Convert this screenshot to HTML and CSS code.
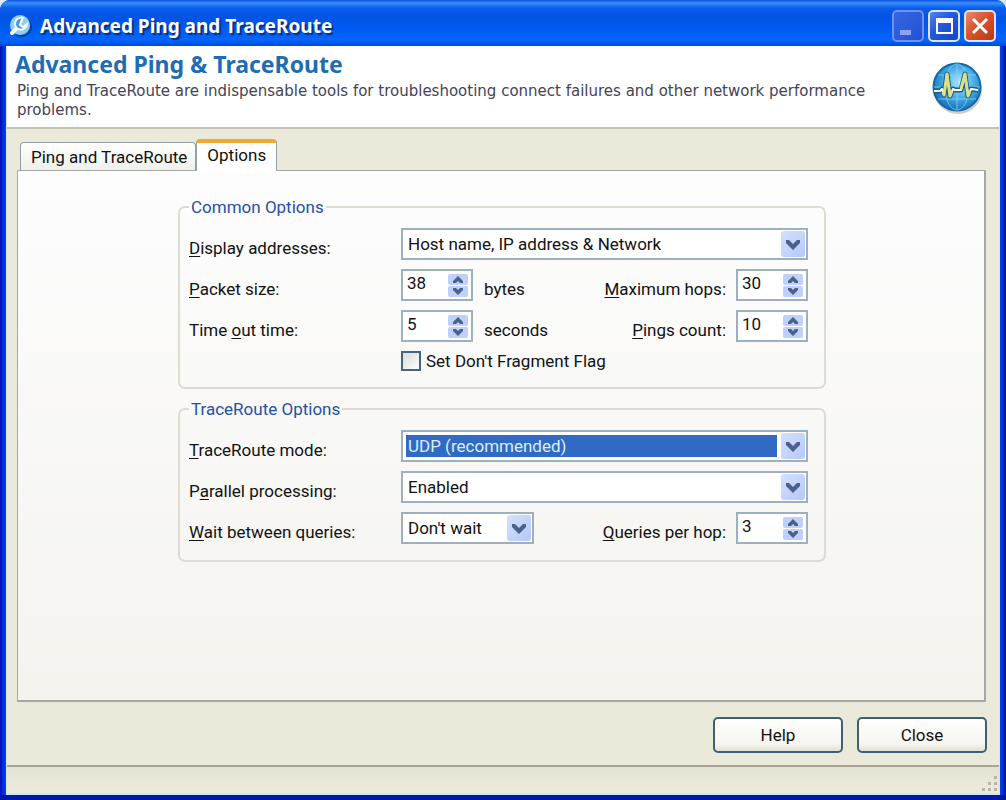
FILE: index.html
```html
<!DOCTYPE html>
<html lang="en">
<head>
<meta charset="utf-8">
<title>Advanced Ping and TraceRoute</title>
<link rel="stylesheet" href="styles.css">
</head>
<body>
<svg class="defs" aria-hidden="true">
  <symbol id="chevron" viewBox="0 0 24 26"><path d="M5 9h3l4 4 4-4h3v3l-7 7-7-7z" fill="#4a6190"/></symbol>
  <symbol id="up" viewBox="0 0 20 11"><path d="M10 2l5 5v2h-3l-2-2-2 2H5V7z" fill="#4a6190"/></symbol>
  <symbol id="down" viewBox="0 0 20 11"><path d="M10 9l5-5V2h-3l-2 2-2-2H5v2z" fill="#4a6190"/></symbol>
</svg>
<div class="window">
  <div class="titlebar">
    <svg class="app-icon" viewBox="0 0 24 24" aria-hidden="true">
      <circle cx="13" cy="13" r="9" fill="#1670cf" stroke="#083da0" stroke-width="2"/>
      <circle cx="11" cy="11" r="10" fill="#8fd0f0"/>
      <path d="M3 19l5-5" stroke="#f4fcff" stroke-width="4" stroke-linecap="round"/>
      <path d="M14 4a6 6 0 1 0 4 6l-4 3-3-2 1-3z" fill="#4b9ad6" stroke="#f4fcff" stroke-width="2"/>
    </svg>
    <div class="title">Advanced Ping and TraceRoute</div>
    <div class="caption-buttons">
      <button class="caption minimize" disabled aria-label="Minimize"><svg viewBox="0 0 28 28"><path d="M6 18h11v5H6z" fill="#8aa5ee"/></svg></button>
      <button class="caption" aria-label="Maximize"><svg viewBox="0 0 28 28"><path d="M7 7h15v14H7z" fill="none" stroke="#fff" stroke-width="2"/><path d="M6 6h17v5H6z" fill="#fff"/></svg></button>
      <button class="caption close" aria-label="Close window"><svg viewBox="0 0 28 28"><path d="M7 7l14 14M21 7L7 21" stroke="#fff" stroke-width="3"/></svg></button>
    </div>
  </div>
  <div class="client">
    <header class="header">
      <div class="header-text">
        <h1>Advanced Ping &amp; TraceRoute</h1>
        <p>Ping and TraceRoute are indispensable tools for troubleshooting connect failures and other network performance problems.</p>
      </div>
      <svg class="logo" viewBox="0 0 52 52" aria-hidden="true">
        <defs><radialGradient id="globe" cx=".55" cy=".4" r=".65"><stop offset="0" stop-color="#b5e8fb"/><stop offset=".5" stop-color="#45aee6"/><stop offset="1" stop-color="#0b66ae"/></radialGradient></defs>
        <circle cx="27" cy="28" r="24" fill="#a9aab5" opacity=".6"/>
        <circle cx="26" cy="25" r="23.500" fill="url(#globe)" stroke="#1569a8" stroke-width="2"/>
        <g fill="none" stroke="#8bd0f3" opacity=".8"><path d="M26 2v46M3 25h46M7 13h38M7 37h38"/><ellipse cx="26" cy="25" rx="12" ry="23"/></g>
        <path d="M3 29h6l2-2 2 6 3-21 3 22 3-7 2 1h6l4-16 3 22 3-7 7 1" fill="none" stroke="#175e88" stroke-width="5" stroke-linejoin="round"/>
        <path d="M3 29h6l2-2 2 6 3-21 3 22 3-7 2 1h6l4-16 3 22 3-7 7 1" fill="none" stroke="#fff" stroke-width="2" stroke-linejoin="round"/>
        <path d="M12 30l1 3 3-21 3 22 2-5M30 27l4-15 3 22 2-5" fill="none" stroke="#dde080" stroke-width="3" stroke-linejoin="round"/>
      </svg>
    </header>
    <main class="body">
      <div class="tabs" role="tablist">
        <button class="tab" role="tab" aria-selected="false">Ping and TraceRoute</button>
        <button class="tab active" role="tab" aria-selected="true">Options</button>
      </div>
      <form class="panel" id="options">
        <fieldset class="group">
          <legend>Common Options</legend>
          <div class="row">
            <label class="name" for="addresses"><u>D</u>isplay addresses:</label>
            <div class="combo"><select id="addresses"><option>Host name, IP address &amp; Network</option></select><svg><use href="#chevron"/></svg></div>
          </div>
          <div class="row">
            <label class="name" for="packet"><u>P</u>acket size:</label>
            <div class="controls">
              <div class="spin"><input id="packet" type="number" value="38"><span class="arrows"><button type="button" aria-label="Increase packet size"><svg><use href="#up"/></svg></button><button type="button" aria-label="Decrease packet size"><svg><use href="#down"/></svg></button></span></div>
              <span class="unit">bytes</span>
              <label class="side" for="hops"><u>M</u>aximum hops:</label>
              <div class="spin"><input id="hops" type="number" value="30"><span class="arrows"><button type="button" aria-label="Increase maximum hops"><svg><use href="#up"/></svg></button><button type="button" aria-label="Decrease maximum hops"><svg><use href="#down"/></svg></button></span></div>
            </div>
          </div>
          <div class="row">
            <label class="name" for="timeout">Time <u>o</u>ut time:</label>
            <div class="controls">
              <div class="spin"><input id="timeout" type="number" value="5"><span class="arrows"><button type="button" aria-label="Increase time out"><svg><use href="#up"/></svg></button><button type="button" aria-label="Decrease time out"><svg><use href="#down"/></svg></button></span></div>
              <span class="unit">seconds</span>
              <label class="side" for="pings"><u>P</u>ings count:</label>
              <div class="spin"><input id="pings" type="number" value="10"><span class="arrows"><button type="button" aria-label="Increase pings count"><svg><use href="#up"/></svg></button><button type="button" aria-label="Decrease pings count"><svg><use href="#down"/></svg></button></span></div>
            </div>
          </div>
          <div class="row">
            <span></span>
            <label class="check"><input type="checkbox">Set Don't Fragment Flag</label>
          </div>
        </fieldset>
        <fieldset class="group">
          <legend>TraceRoute Options</legend>
          <div class="row">
            <label class="name" for="mode"><u>T</u>raceRoute mode:</label>
            <div class="combo selected"><select id="mode"><option>UDP (recommended)</option></select><svg><use href="#chevron"/></svg></div>
          </div>
          <div class="row">
            <label class="name" for="parallel">P<u>a</u>rallel processing:</label>
            <div class="combo"><select id="parallel"><option>Enabled</option></select><svg><use href="#chevron"/></svg></div>
          </div>
          <div class="row">
            <label class="name" for="wait"><u>W</u>ait between queries:</label>
            <div class="controls">
              <div class="combo short"><select id="wait"><option>Don't wait</option></select><svg><use href="#chevron"/></svg></div>
              <label class="side" for="queries"><u>Q</u>ueries per hop:</label>
              <div class="spin"><input id="queries" type="number" value="3"><span class="arrows"><button type="button" aria-label="Increase queries per hop"><svg><use href="#up"/></svg></button><button type="button" aria-label="Decrease queries per hop"><svg><use href="#down"/></svg></button></span></div>
            </div>
          </div>
        </fieldset>
      </form>
      <div class="actions">
        <button class="action">Help</button>
        <button class="action">Close</button>
      </div>
    </main>
    <footer class="status">
      <svg class="grip" viewBox="0 0 18 18" aria-hidden="true"><path d="M13 1h3v3h-3zM7 7h3v3H7zM13 7h3v3h-3zM1 13h3v3H1zM7 13h3v3H7zM13 13h3v3h-3z" fill="#b9b5a2"/></svg>
    </footer>
  </div>
</div>
</body>
</html>
```
FILE: styles.css
```css
* { box-sizing: border-box; }

body {
  margin: 0;
  background: #d5ecf7;
  color: #111;
  font: 17px/22px Roboto, "Liberation Sans", sans-serif;
}

button, input, select { font: inherit; color: inherit; }

.defs { display: none; }

.window {
  display: flex;
  flex-direction: column;
  min-height: 100vh;
  padding: 0 6px 5px;
  border-radius: 10px 10px 0 0;
  background: linear-gradient(90deg, #0010b8, #0a3ce0 5px, #0a3ce0 calc(100% - 5px), #0014a0);
  box-shadow: inset 0 -5px #0018a8;
}

.titlebar {
  display: flex;
  align-items: center;
  height: 46px;
  margin: 0 -6px;
  padding: 5px 10px 0 9px;
  border-radius: 10px 10px 0 0;
  background: linear-gradient(#0a50dc 0, #3a90fa 3px, #0a5cec 8px, #0054e4 18px, #005cf4 30px, #0266fc 40px, #0049d0 46px);
}

.app-icon { width: 24px; height: 24px; }

.title {
  flex: 1;
  padding-left: 7px;
  color: #fff;
  font: bold 19px/28px "Noto Sans", sans-serif;
  text-shadow: 2px 2px 1px #06308c;
}

.caption-buttons { display: flex; gap: 4px; }

.caption {
  width: 32px;
  height: 32px;
  padding: 0;
  border: 2px solid #d9e5ff;
  border-radius: 5px;
  background: linear-gradient(135deg, #5183ee, #245bdf 40%, #1443c4);
}

.caption svg { display: block; width: 28px; height: 28px; }
.minimize { border-color: #6e92ee; background: linear-gradient(135deg, #3566e2, #2351d8); }
.close { background: linear-gradient(135deg, #e88a6c, #d9532d 45%, #b9370f); }

.client {
  flex: 1;
  display: flex;
  flex-direction: column;
  border: 1px solid #cbe6fa;
  border-top: 0;
  border-bottom-width: 2px;
  background: #ebe9d9;
}

.header {
  display: flex;
  justify-content: space-between;
  min-height: 83px;
  padding: 4px 16px 0 8px;
  border-bottom: 2px solid #c4c2b6;
  background: #fff;
}

h1 {
  margin: 0;
  color: #1c6db5;
  font: bold 23px/28px "Noto Sans", sans-serif;
}

.header p {
  margin: 4px 0 0 2px;
  color: #444455;
  font: 15px/19px "DejaVu Sans", sans-serif;
}

.logo { flex: none; width: 52px; height: 52px; margin-top: 12px; }

.body {
  flex: 1;
  display: flex;
  flex-direction: column;
  padding: 10px 12px 12px 10px;
}

.tabs { display: flex; align-items: flex-end; padding-left: 3px; }

.tab {
  height: 28px;
  padding: 0 8px 0 10px;
  border: 1px solid #93a0a5;
  border-bottom: 0;
  border-radius: 4px 4px 0 0;
  background: linear-gradient(#fff, #efefea);
}

.tab.active {
  height: 32px;
  margin-bottom: -1px;
  padding: 0 10px 4px;
  border-top: 4px solid #f0a92c;
  background: #fff;
  z-index: 1;
}

.panel {
  flex: 1;
  display: flex;
  flex-direction: column;
  align-items: center;
  gap: 9px;
  margin-right: 1px;
  padding: 25px 16px 25px 18px;
  border: 2px solid #a4a8a4;
  border-width: 1px 2px 2px 1px;
  background: linear-gradient(#fdfdfe, #f4f3ee);
}

.group {
  display: flex;
  flex-direction: column;
  gap: 9px;
  width: 100%;
  max-width: 648px;
  min-width: 0;
  margin: 0;
  padding: 10px 16px 16px 9px;
  border: 2px solid #dddcd2;
  border-radius: 7px;
}

legend { padding: 0 2px; color: #2450a5; }

.row { display: grid; grid-template-columns: 212px 1fr; }
.name { padding-top: 8px; line-height: 24px; }
.controls { display: flex; }
.unit { padding: 8px 0 0 11px; line-height: 24px; }
.side { margin-left: auto; padding: 8px 10px 0 0; line-height: 24px; }
u { text-underline-offset: 2px; }

.combo { display: grid; height: 32px; }
.combo > * { grid-area: 1 / 1; }

.combo select {
  appearance: none;
  width: 100%;
  height: 32px;
  padding: 3px 29px 3px 3px;
  border: 2px solid #9db0c1;
  border-radius: 0;
  background: #fff;
  text-indent: 2px;
  outline: 0;
}

.combo svg {
  justify-self: end;
  width: 24px;
  height: 26px;
  margin: 3px;
  border-radius: 3px;
  background: linear-gradient(135deg, #d3e0ff, #b5c8f8);
  pointer-events: none;
}

.selected select {
  color: #d8f0ff;
  background: linear-gradient(#316ac5, #316ac5) content-box, #fff;
}

.short { width: 133px; }

.spin {
  display: flex;
  width: 72px;
  height: 32px;
  border: 2px solid #9db0c1;
  background: #fff;
}

.spin input {
  appearance: textfield;
  flex: 1;
  min-width: 0;
  padding: 0 0 4px 4px;
  border: 0;
  background: none;
  outline: 0;
}

.spin input::-webkit-inner-spin-button { display: none; }

.arrows { display: flex; flex-direction: column; gap: 1px; padding: 3px; }

.arrows button {
  display: block;
  width: 20px;
  height: 11px;
  padding: 0;
  border: 0;
  border-radius: 2px;
  background: #c0d0fa;
}

.arrows svg { display: block; width: 20px; height: 11px; }

.check { display: flex; align-items: center; gap: 5px; height: 20px; }

.check input {
  appearance: none;
  width: 20px;
  height: 20px;
  margin: 0;
  border: 2px solid #44657c;
  background: linear-gradient(135deg, #d9dcd8, #fff);
}

.actions { display: flex; justify-content: flex-end; gap: 14px; padding-top: 15px; }

.action {
  width: 130px;
  height: 36px;
  border: 2px solid #3f6074;
  border-radius: 5px;
  background: linear-gradient(#fff, #f5f4ef 80%, #e3e0d4);
}

.status {
  display: flex;
  justify-content: flex-end;
  align-items: flex-end;
  height: 28px;
  border-top: 2px solid #a8a698;
  background: linear-gradient(#e4e2d2, #edebdc);
}

.grip { width: 18px; height: 18px; }
```
